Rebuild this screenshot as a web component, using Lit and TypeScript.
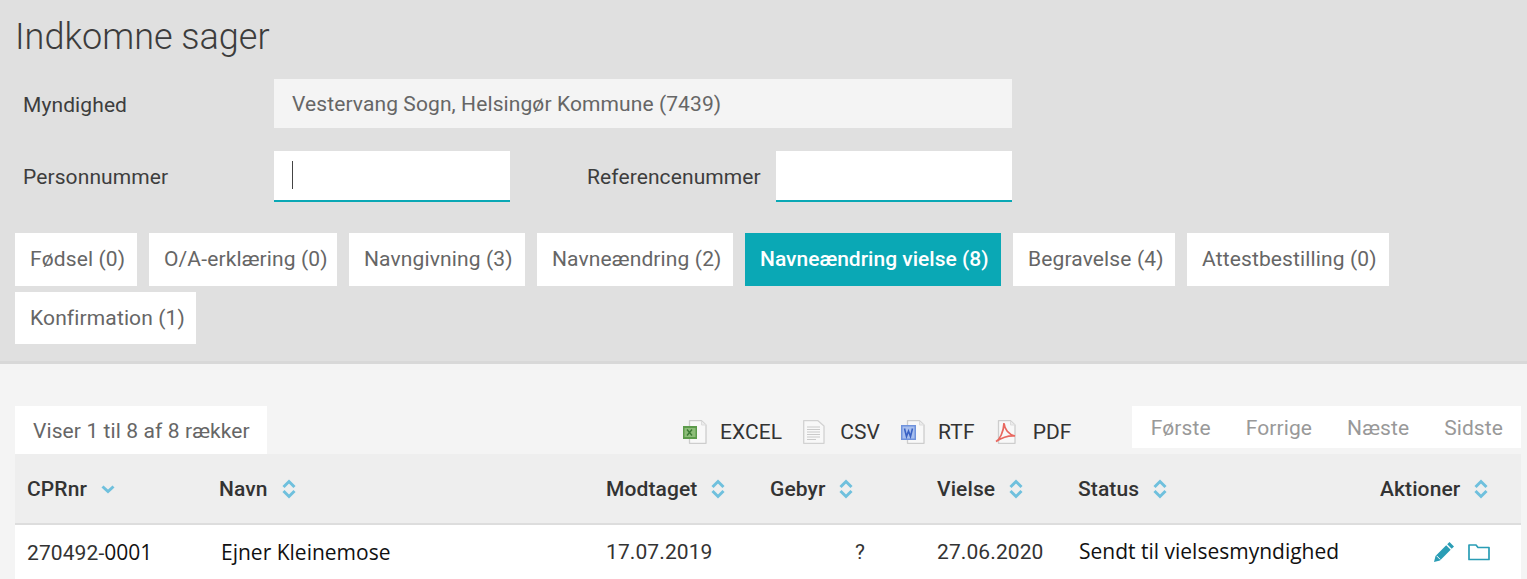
import { LitElement, html, css, svg } from "lit";
import { customElement } from "lit/decorators.js";
import { styleMap } from "lit/directives/style-map.js";

const tabs = [
  ["Fødsel (0)", false, 122],
  ["O/A-erklæring (0)", false, 188],
  ["Navngivning (3)", false, 176],
  ["Navneændring (2)", false, 196],
  ["Navneændring vielse (8)", true, 256],
  ["Begravelse (4)", false, 162],
  ["Attestbestilling (0)", false, 202],
  ["Konfirmation (1)", false, 181],
] as const;

const cols = ["CPRnr", "Navn", "Modtaget", "Gebyr", "Vielse", "Status", "Aktioner"];

const doc = (x: number) => svg`
  <path d="M${x + 0.5} 0.700H${x + 12.5}L${x + 17} 5V23.300H${x + 0.5}Z" fill="#f8f8f8" stroke="#cdcdcd" stroke-width="1.300" stroke-linejoin="round"/>
  <path d="M${x + 12.5} 1V5H${x + 17}" fill="#ececec" stroke="#dcdcdc" stroke-width="1"/>`;

const icon = (inner: unknown) => html`<svg class="file" width="24" height="24" viewBox="0 0 24 24">${inner}</svg>`;

const excel = icon(svg`${doc(6)}<rect x="0" y="6" width="14" height="13" fill="#5b9a4a"/><rect x="1.500" y="8" width="11" height="9" fill="#8dbd79"/><path d="M4 9.500l5 6M9 9.500l-5 6" stroke="#3c7a35" stroke-width="1.400"/>`);
const csv = icon(svg`
  <path d="M.7.700H15L21 6V23.300H.7Z" fill="#f8f8f8" stroke="#d2d2d2" stroke-width="1.300" stroke-linejoin="round"/>
  <path d="M4 7h13M4 9.500h13M4 12h13M4 14.500h13M4 17h13M4 19.500h9" stroke="#cacaca" stroke-width="1"/>`);
const rtf = icon(svg`${doc(6)}<rect x="0" y="5" width="15" height="15" fill="#6f92dc"/><rect x="1.500" y="6.500" width="12" height="12" fill="#a8bfee"/><path d="M3.500 8.500l2 8 2-5.500 2 5.500 2-8" fill="none" stroke="#3a62c4" stroke-width="1.600"/>`);
const pdf = icon(svg`${doc(3)}<path d="M1 21.500C4.500 19.500 8.500 13 9 3c.5 6 4.500 11.500 11 13-5.500-.5-12 1-19 5.500Z" fill="none" stroke="#e8675f" stroke-width="1.700"/>`);

const sortBoth = html`<svg class="sort" width="14" height="20" viewBox="0 0 14 20">
  <path d="M1.500 8L7 2.500 12.500 8M1.500 12L7 17.500 12.500 12" fill="none" stroke="#6fc0dd" stroke-width="3"/>
</svg>`;
const sortDown = html`<svg class="sort" width="14" height="20" viewBox="0 0 14 20">
  <path d="M1.500 7.500L7 12.500 12.500 7.500" fill="none" stroke="#6fc0dd" stroke-width="3"/>
</svg>`;

@customElement("app-root")
export class AppRoot extends LitElement {
  static styles = css`
    :host { display: block; height: 579px; overflow: hidden; background: #f4f4f4; font-family: Roboto, "Liberation Sans", sans-serif; color: #333; font-size: 21px; letter-spacing: 0.1px; }
    .top { background: #e0e0e0; border-bottom: 3px solid #d8d8d8; height: 364px; box-sizing: border-box; padding: 0 15px; }
    h1 { margin: 0; padding-top: 16px; height: 79px; box-sizing: border-box; font-weight: 300; font-size: 36px; line-height: 42px; letter-spacing: 0; color: #3c3c3c; }
    .row { display: flex; align-items: center; color: #3d3d3d; }
    .row .label { width: 259px; padding-left: 8px; padding-top: 2px; box-sizing: border-box; }
    .ro { width: 738px; height: 49px; background: #f4f4f4; color: #666; display: flex; align-items: center; padding-left: 18px; box-sizing: border-box; }
    .row2 { margin-top: 23px; height: 51px; }
    .row2 .label { padding-top: 0; }
    .inp { height: 51px; width: 236px; background: #fff; border-bottom: 2px solid #0aa8b5; box-sizing: border-box; padding: 10px 0 0 18px; }
    .caret { display: block; width: 1px; height: 28px; background: #444; }
    .label2 { width: 266px; padding-left: 77px; box-sizing: border-box; }
    .tabs { display: flex; flex-wrap: wrap; gap: 6px 12px; margin-top: 31px; }
    .tab { height: 52.5px; background: #fff; padding: 0 0 1px 15px; display: flex; align-items: center; color: #666; box-sizing: border-box; letter-spacing: 0.13px; white-space: nowrap; }
    .tab:last-child { padding-bottom: 0; }
    .tab.on { background: #0aa8b5; color: #fff; font-weight: 500; letter-spacing: 0; }
    .bottom { padding: 42px 6px 0 15px; }
    .bar { display: flex; align-items: flex-start; height: 48px; }
    .info { width: 252px; height: 48px; background: #fff; display: flex; align-items: center; padding: 1px 0 0 18px; box-sizing: border-box; color: #666; }
    .tools { display: flex; align-items: center; margin-left: 415.5px; height: 51px; color: #333; }
    .tool { display: flex; align-items: center; }
    .tool .t { margin-left: 13.5px; }
    .tool + .tool { margin-left: 20.5px; }
    .file { display: block; flex: none; }
    .pager { margin-left: auto; display: flex; height: 42px; background: #fff; align-items: center; padding: 1px 18px 0 19px; box-sizing: border-box; gap: 35px; color: #999; }
    .grid { display: grid; grid-template-columns: 192px 387px 164px 167px 141px 302px 153px; }
    .head { background: #eee; height: 71px; border-bottom: 2px solid #ddd; box-sizing: border-box; align-items: center; }
    .th { display: flex; align-items: center; padding-left: 12px; font-weight: 500; color: #333; }
    .th .sort { margin-left: 14px; }
    .body { background: #fff; height: 60px; align-items: center; padding-bottom: 6px; box-sizing: border-box; }
    .td { padding-left: 12px; color: #333; white-space: nowrap; }
    .os { font-family: "Open Sans", sans-serif; color: #111; letter-spacing: 0; line-height: 24px; }
    .name { padding-left: 14px; }
    .status { padding: 0 0 2px 13px; }
    .q { padding-left: 97px; }
    .acts { display: flex; align-items: center; gap: 13px; padding-left: 65px; }
  `;
  render() {
    return html`
      <div class="top">
        <h1>Indkomne sager</h1>
        <div class="row">
          <div class="label">Myndighed</div>
          <div class="ro">Vestervang Sogn, Helsingør Kommune (7439)</div>
        </div>
        <div class="row row2">
          <div class="label">Personnummer</div>
          <div class="inp"><span class="caret"></span></div>
          <div class="label2">Referencenummer</div>
          <div class="inp"></div>
        </div>
        <div class="tabs">
          ${tabs.map(([t, on, w]) => html`<div class="tab ${on ? "on" : ""}" style=${styleMap({ width: `${w}px` })}>${t}</div>`)}
        </div>
      </div>
      <div class="bottom">
        <div class="bar">
          <div class="info">Viser 1 til 8 af 8 rækker</div>
          <div class="tools">
            <div class="tool">${excel}<span class="t">EXCEL</span></div>
            <div class="tool">${csv}<span class="t">CSV</span></div>
            <div class="tool">${rtf}<span class="t">RTF</span></div>
            <div class="tool">${pdf}<span class="t">PDF</span></div>
          </div>
          <div class="pager"><span>Første</span><span>Forrige</span><span>Næste</span><span>Sidste</span></div>
        </div>
        <div class="grid head">
          ${cols.map((c, i) => html`<div class="th">${c}${i === 0 ? sortDown : sortBoth}</div>`)}
        </div>
        <div class="grid body">
          <div class="td">270492-<span class="os">0001</span></div>
          <div class="td os name">Ejner Kleinemose</div>
          <div class="td">17.07.2019</div>
          <div class="td q">?</div>
          <div class="td">27.06.2020</div>
          <div class="td os status">Sendt til vielsesmyndighed</div>
          <div class="acts">
            <svg width="22" height="22" viewBox="0 0 22 22"><path d="M16.500 1l4.500 4.500-2.300 2.300-4.500-4.500ZM13.200 4.300l4.500 4.500L7 19.500 1 21l1.500-6Z" fill="#2a9db5"/><path d="M3.600 14.800l3.600 3.600" stroke="#fff" stroke-width="1"/></svg>
            <svg width="22" height="18" viewBox="0 0 22 18"><path d="M1 2h7l2 2.500h11V16.500H1Z" fill="none" stroke="#2a9db5" stroke-width="1.700" stroke-linejoin="round"/></svg>
          </div>
        </div>
      </div>
    `;
  }
}
